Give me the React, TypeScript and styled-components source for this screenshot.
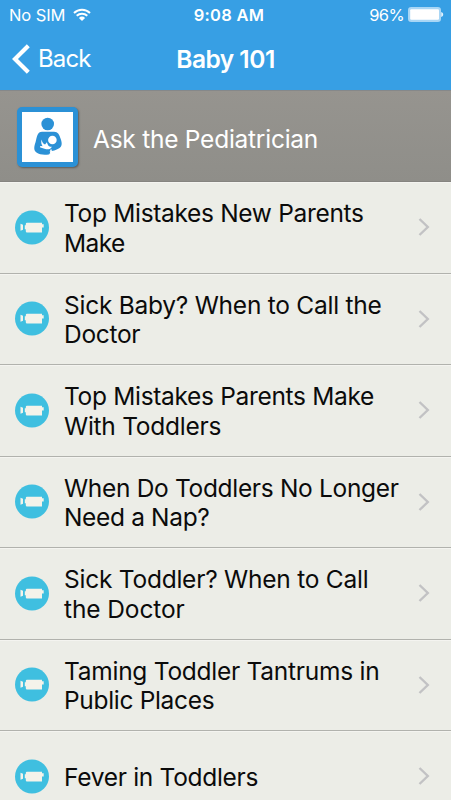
import React from "react";
import styled, { createGlobalStyle } from "styled-components";

const GlobalStyle = createGlobalStyle`
  * { box-sizing: border-box; }
  html, body { margin: 0; padding: 0; }
  body { background: #ecede7; font-family: Inter, "Liberation Sans", sans-serif; overflow: hidden; }
  svg { display: block; flex: none; }
`;

const Screen = styled.main`
  width: 451px;
  height: 800px;
  overflow: hidden;
  background: #ecede7;
`;

const TopBar = styled.header`
  height: 90px;
  background: #379fe4;
  color: #fff;
`;

const StatusBar = styled.div`
  height: 29px;
  display: grid;
  grid-template-columns: 1fr auto 1fr;
  align-items: center;
  padding: 0 7px 0 9px;
  font-size: 16.5px;
  line-height: 28px;
`;

const StatusGroup = styled.div<{ $end?: boolean }>`
  display: flex;
  align-items: center;
  gap: ${(p) => (p.$end ? 4 : 8)}px;
  justify-content: ${(p) => (p.$end ? "flex-end" : "flex-start")};
`;

const StatusText = styled.span<{ $spacing: number }>`
  letter-spacing: ${(p) => p.$spacing}px;
  white-space: nowrap;
`;

const Clock = styled.span`
  font-weight: 600;
  font-size: 16.5px;
  letter-spacing: 0.25px;
  padding-left: 5px;
  white-space: nowrap;
`;

const NavBar = styled.nav`
  height: 61px;
  display: grid;
  grid-template-columns: 1fr auto 1fr;
  align-items: center;
  padding: 0 12px 2px;
`;

const BackButton = styled.button`
  display: flex;
  align-items: center;
  gap: 8px;
  padding: 0;
  border: 0;
  background: none;
  color: #fff;
  font: 400 24px/30px Inter, sans-serif;
  letter-spacing: -0.9px;
`;

const Title = styled.h1`
  margin: 0;
  font-size: 24.5px;
  line-height: 30px;
  font-weight: 600;
  letter-spacing: -0.5px;
`;

const Section = styled.section`
  height: 92px;
  display: flex;
  align-items: center;
  gap: 15px;
  padding: 2px 0 0 17px;
  background: linear-gradient(#96948f, #8f8e89);
  border-top: 1px solid #85888a;
  border-bottom: 1px solid #858480;
  color: #fff;
`;

const SectionBadge = styled.div`
  width: 61px;
  height: 60px;
  flex: none;
  display: flex;
  align-items: center;
  justify-content: center;
  padding-bottom: 2px;
  border: 5px solid #2b91d6;
  border-radius: 5px;
  background: #fff;
  box-shadow: 1px 1px 2px rgba(50, 50, 50, 0.55);
`;

const SectionTitle = styled.h2`
  margin: 0;
  padding-top: 3px;
  font-size: 24.5px;
  line-height: 30px;
  font-weight: 400;
  letter-spacing: -0.25px;
`;

const List = styled.ul`
  margin: 0;
  padding: 0;
  list-style: none;
`;

const Row = styled.li`
  height: 91.5px;
  display: flex;
  align-items: center;
  padding: 0 21px 0 15px;
  border-bottom: 1px solid #b1b2ad;
  box-shadow: inset 0 1px 0 #f4f4f0;
`;

const RowText = styled.div`
  flex: 1;
  margin-left: 15px;
  padding-top: 3px;
  font-size: 24.5px;
  line-height: 29.5px;
  color: #0b0b0b;
`;

const Line = styled.span<{ $spacing: number }>`
  display: block;
  white-space: nowrap;
  letter-spacing: ${(p) => p.$spacing}px;
`;

const WifiIcon = () => (
  <svg width="18" height="14" viewBox="0 0 18 14" fill="none" stroke="#fff" strokeWidth="2">
    <path d="M1 5C5.4.7 12.600.7 17 5M3.700 7.800c3-2.800 7.600-2.800 10.600 0" />
    <path d="M5.900 9.900a4.400 4.400 0 0 1 6.200 0L9 13Z" fill="#fff" stroke="none" />
  </svg>
);

const BatteryIcon = () => (
  <svg width="36" height="15" viewBox="0 0 36 15">
    <rect x="0.750" y="0.750" width="31.500" height="13.500" rx="2.500" fill="#a9d6f5" stroke="#a9d6f5" strokeWidth="1.500" />
    <rect x="2.200" y="2.200" width="28.800" height="10.600" rx="1.200" fill="#fff" />
    <path d="M33.200 5c1.500.4 2 1.400 2 2.500s-.5 2.100-2 2.500Z" fill="#e5f3fd" />
  </svg>
);

const BackIcon = () => (
  <svg width="18" height="30" viewBox="0 0 18 30" fill="none" stroke="#fff" strokeWidth="4.200">
    <path d="M16.300 1.800 3 15l13.300 13.200" />
  </svg>
);

const NursingIcon = () => (
  <svg width="30" height="39" viewBox="0 0 30 39" fill="#2b91d6">
    <circle cx="14.700" cy="7" r="6.300" />
    <path d="M9 14.700h12c4 0 5.500 3 6.800 7.500 1.500 4.500 1.200 7-1.600 9-3.200 2.200-6.700 2.700-9.700 3.200 1.300.8.800 2.700-.8 3-3.900.7-9.400.4-12.200-1.800-3.300-2.500-2.300-6.200-.9-10.500C4 19.200 4.500 14.700 9 14.700Z" />
    <circle cx="19.400" cy="23" r="4.300" fill="#fff" />
    <path d="M8.600 22.500c.5 3.300 2 4.500 3.500 5l1.800-2.300c1.300 4.500 2.800 4.600 5 4.600-.9 2-3.200 3-5.800 2.400l-5.600-1.800c-1.100-.5-.4-1.500.6-1.300l1.500.2c-1.200-1.700-1.800-4.300-1-6.800Z" fill="#fff" />
    <path d="M15.500 37c2.200-.8 2.600-2.600 1.400-3.900l1.600-.8.700 3.200Z" fill="#fff" />
  </svg>
);

const VideoIcon = () => (
  <svg width="34" height="35" viewBox="0 0 34 35">
    <circle cx="17" cy="17.500" r="17" fill="#3fbfe0" />
    <path d="M5.500 13.800 8 14.800v5l-2.500 1ZM12 12.800h15v1.500h1.700v3.200h-1.700v5H12a1.200 1.200 0 0 1-1.200-1.200v-2H9.800v-4h1v-1.300a1.200 1.200 0 0 1 1.200-1.200Z" fill="#f4f3ea" />
  </svg>
);

const ChevronIcon = () => (
  <svg width="12" height="20" viewBox="0 0 12 20" fill="none" stroke="#c2c2c4" strokeWidth="2.400">
    <path d="m1.500 2 8.300 8-8.300 8" />
  </svg>
);

type TextLine = { text: string; spacing: number };

const topics: TextLine[][] = [
  [{ text: "Top Mistakes New Parents", spacing: -0.32 }, { text: "Make", spacing: -0.6 }],
  [{ text: "Sick Baby? When to Call the", spacing: -0.25 }, { text: "Doctor", spacing: -0.3 }],
  [{ text: "Top Mistakes Parents Make", spacing: -0.32 }, { text: "With Toddlers", spacing: -0.25 }],
  [{ text: "When Do Toddlers No Longer", spacing: -0.32 }, { text: "Need a Nap?", spacing: -0.35 }],
  [{ text: "Sick Toddler? When to Call", spacing: -0.24 }, { text: "the Doctor", spacing: -0.1 }],
  [{ text: "Taming Toddler Tantrums in", spacing: -0.26 }, { text: "Public Places", spacing: -0.32 }],
  [{ text: "Fever in Toddlers", spacing: -0.3 }],
];

export default function App() {
  return (
    <>
      <GlobalStyle />
      <Screen>
        <TopBar>
          <StatusBar>
            <StatusGroup>
              <StatusText $spacing={-0.1}>No SIM</StatusText>
              <WifiIcon />
            </StatusGroup>
            <Clock>9:08 AM</Clock>
            <StatusGroup $end>
              <StatusText $spacing={-0.6}>96%</StatusText>
              <BatteryIcon />
            </StatusGroup>
          </StatusBar>
          <NavBar>
            <BackButton>
              <BackIcon />
              Back
            </BackButton>
            <Title>Baby 101</Title>
          </NavBar>
        </TopBar>
        <Section>
          <SectionBadge>
            <NursingIcon />
          </SectionBadge>
          <SectionTitle>Ask the Pediatrician</SectionTitle>
        </Section>
        <List>
          {topics.map((lines) => (
            <Row key={lines[0].text}>
              <VideoIcon />
              <RowText>
                {lines.map((line) => (
                  <Line key={line.text} $spacing={line.spacing}>
                    {line.text}
                  </Line>
                ))}
              </RowText>
              <ChevronIcon />
            </Row>
          ))}
        </List>
      </Screen>
    </>
  );
}
